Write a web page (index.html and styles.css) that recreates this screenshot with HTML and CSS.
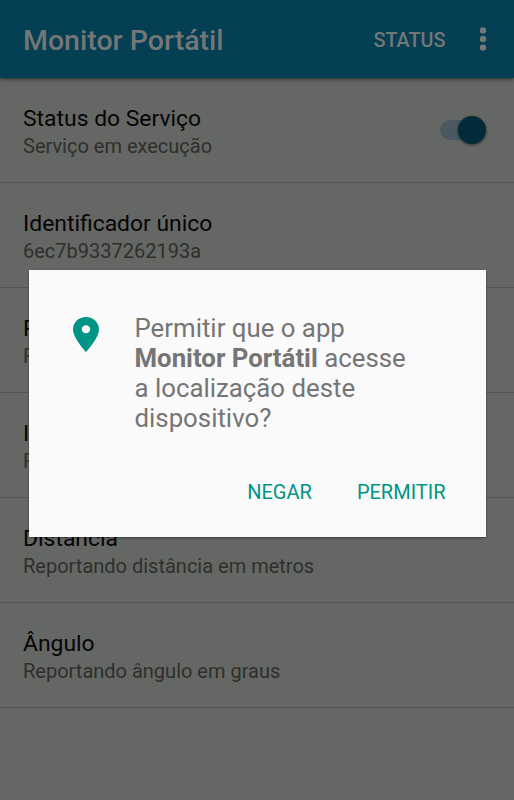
FILE: index.html
```html
<!DOCTYPE html>
<html lang="pt-BR">
<head>
  <meta charset="UTF-8">
  <title>Monitor Portátil</title>
  <link rel="stylesheet" href="styles.css">
</head>
<body>
  <header class="toolbar">
    <h1>Monitor Portátil</h1>
    <span class="action">STATUS</span>
    <svg class="more" viewBox="0 0 8 24" width="8" height="24">
      <circle cx="4" cy="3.4" r="3.2"/>
      <circle cx="4" cy="12" r="3.2"/>
      <circle cx="4" cy="20.6" r="3.2"/>
    </svg>
  </header>

  <main class="list">
    <div class="item">
      <div>
        <p class="title">Status do Serviço</p>
        <p class="summary">Serviço em execução</p>
      </div>
      <div class="switch"><div class="thumb"></div></div>
    </div>
    <div class="item">
      <div>
        <p class="title">Identificador único</p>
        <p class="summary">6ec7b9337262193a</p>
      </div>
    </div>
    <div class="item">
      <div>
        <p class="title">R</p>
        <p class="summary">R</p>
      </div>
    </div>
    <div class="item">
      <div>
        <p class="title">I</p>
        <p class="summary">R</p>
      </div>
    </div>
    <div class="item">
      <div>
        <p class="title">Distância</p>
        <p class="summary">Reportando distância em metros</p>
      </div>
    </div>
    <div class="item">
      <div>
        <p class="title">Ângulo</p>
        <p class="summary">Reportando ângulo em graus</p>
      </div>
    </div>
  </main>

  <div class="dialog">
    <div class="message">
      <svg class="pin" viewBox="5 2 14 20" width="26" height="35" preserveAspectRatio="none">
        <path fill-rule="evenodd" d="M12 2C8.13 2 5 5.13 5 9c0 5.25 7 13 7 13s7-7.75 7-13c0-3.87-3.13-7-7-7zm0 9.3c-1.27 0-2.3-1.03-2.3-2.3s1.03-2.3 2.3-2.3 2.3 1.03 2.3 2.3-1.03 2.3-2.3 2.3z"/>
      </svg>
      <p>Permitir que o app<br><b>Monitor Portátil</b> acesse<br>a localização deste<br>dispositivo?</p>
    </div>
    <div class="buttons">
      <button>NEGAR</button>
      <button>PERMITIR</button>
    </div>
  </div>
</body>
</html>
```

FILE: styles.css
```css
* { box-sizing: border-box; margin: 0; padding: 0; }
body { height: 800px; overflow: hidden; font-family: Roboto, sans-serif; background: #656764; }

.toolbar { position: relative; display: flex; align-items: center; height: 78px; padding: 2px 27.5px 0 23px; background: #043f54; color: #737776; box-shadow: 0 1px 4px rgba(0, 0, 0, 0.6); }
.toolbar h1 { flex: 1; font-size: 28.5px; font-weight: 500; }
.action { font-size: 19.8px; font-weight: 500; }
.more { margin-left: 33px; margin-top: -3px; fill: #737776; }

.item { display: flex; justify-content: space-between; height: 105px; padding: 27px 28px 0 23px; border-bottom: 1px solid #545653; }
.title { font-size: 22.9px; line-height: 27px; color: #050505; }
.summary { font-size: 20px; line-height: 28px; color: #2e2f2d; }

.switch { display: flex; align-items: center; justify-content: flex-end; width: 46px; height: 20px; margin-top: 15px; border-radius: 10px; background: linear-gradient(90deg, #4a5960 32px, transparent 32px); }
.thumb { width: 28px; height: 28px; flex: none; border-radius: 50%; background: #022a38; box-shadow: 0 1px 3px rgba(0, 0, 0, 0.5); }

.dialog { position: absolute; left: 28.5px; top: 270px; width: 457px; height: 267px; padding: 43px 40px 0 44px; background: #fafafa; box-shadow: 0 1px 2px rgba(0, 0, 0, 0.4); }
.message { display: flex; gap: 36px; color: #757575; font-size: 25.8px; line-height: 30px; }
.pin { flex: none; margin-top: 4px; fill: #009486; }
.buttons { display: flex; justify-content: flex-end; gap: 45px; margin-top: 47px; }
.buttons button { border: 0; background: none; font: 20px/24px Roboto, sans-serif; color: #009486; }
```
